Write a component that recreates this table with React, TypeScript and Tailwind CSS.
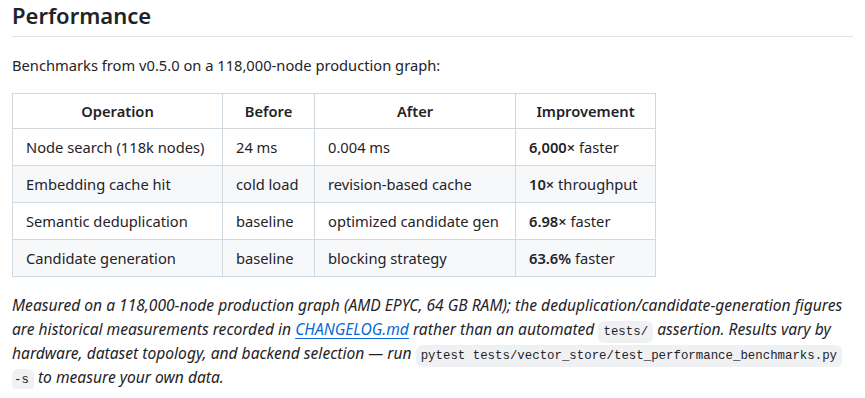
const rows = [
  { op: "Node search (118k nodes)", before: "24 ms", after: "0.004 ms", bold: "6,000×", rest: " faster" },
  { op: "Embedding cache hit", before: "cold load", after: "revision-based cache", bold: "10×", rest: " throughput" },
  { op: "Semantic deduplication", before: "baseline", after: "optimized candidate gen", bold: "6.98×", rest: " faster" },
  { op: "Candidate generation", before: "baseline", after: "blocking strategy", bold: "63.6%", rest: " faster" },
];

const cell = "border border-[#d1d9e0] px-[13px] whitespace-nowrap";
const code =
  "rounded-[6px] bg-[#eff1f3] px-[5px] py-[4px] leading-4 not-italic text-[12.4px] font-['Liberation_Mono',monospace]";

export default function App() {
  return (
    <div className="bg-white px-3 text-[14.7px] leading-6 text-[#1f2328] font-['Noto_Sans',sans-serif]">
      <h2 className="border-b border-[#d1d9e0b3] pb-[6px] text-[22px] font-semibold leading-[30px]">Performance</h2>

      <p className="mt-4">Benchmarks from v0.5.0 on a 118,000-node production graph:</p>

      <table className="mt-4 w-[643px] table-fixed border-collapse">
        <thead>
          <tr className="bg-white">
            <th className={`${cell} w-[210px] py-[5px] text-center font-semibold`}>Operation</th>
            <th className={`${cell} w-[92px] py-[5px] text-center font-semibold`}>Before</th>
            <th className={`${cell} w-[201px] py-[5px] text-center font-semibold`}>After</th>
            <th className={`${cell} w-[140px] py-[5px] text-center font-semibold`}>Improvement</th>
          </tr>
        </thead>
        <tbody>
          {rows.map((r, i) => (
            <tr key={r.op} className={i % 2 === 1 ? "bg-[#f6f8fa]" : "bg-white"}>
              <td className={`${cell} py-[6px]`}>{r.op}</td>
              <td className={`${cell} py-[6px]`}>{r.before}</td>
              <td className={`${cell} py-[6px]`}>{r.after}</td>
              <td className={`${cell} py-[6px]`}>
                <strong className="font-semibold">{r.bold}</strong>
                {r.rest}
              </td>
            </tr>
          ))}
        </tbody>
      </table>

      <p className="mt-4 whitespace-nowrap text-[15.6px] italic">
        Measured on a 118,000-node production graph (AMD EPYC, 64 GB RAM); the deduplication/candidate-generation figures
        <br />
        are historical measurements recorded in{" "}
        <a href="#" className="text-[#0969da] underline underline-offset-[3px]">CHANGELOG.md</a> rather than an automated{" "}
        <code className={code}>tests/</code> assertion. Results vary by
        <br />
        hardware, dataset topology, and backend selection — run{" "}
        <code className={code}>pytest tests/vector_store/test_performance_benchmarks.py</code>
        <br />
        <code className={`${code} pl-[2px]`}>-s</code> to measure your own data.
      </p>
    </div>
  );
}
